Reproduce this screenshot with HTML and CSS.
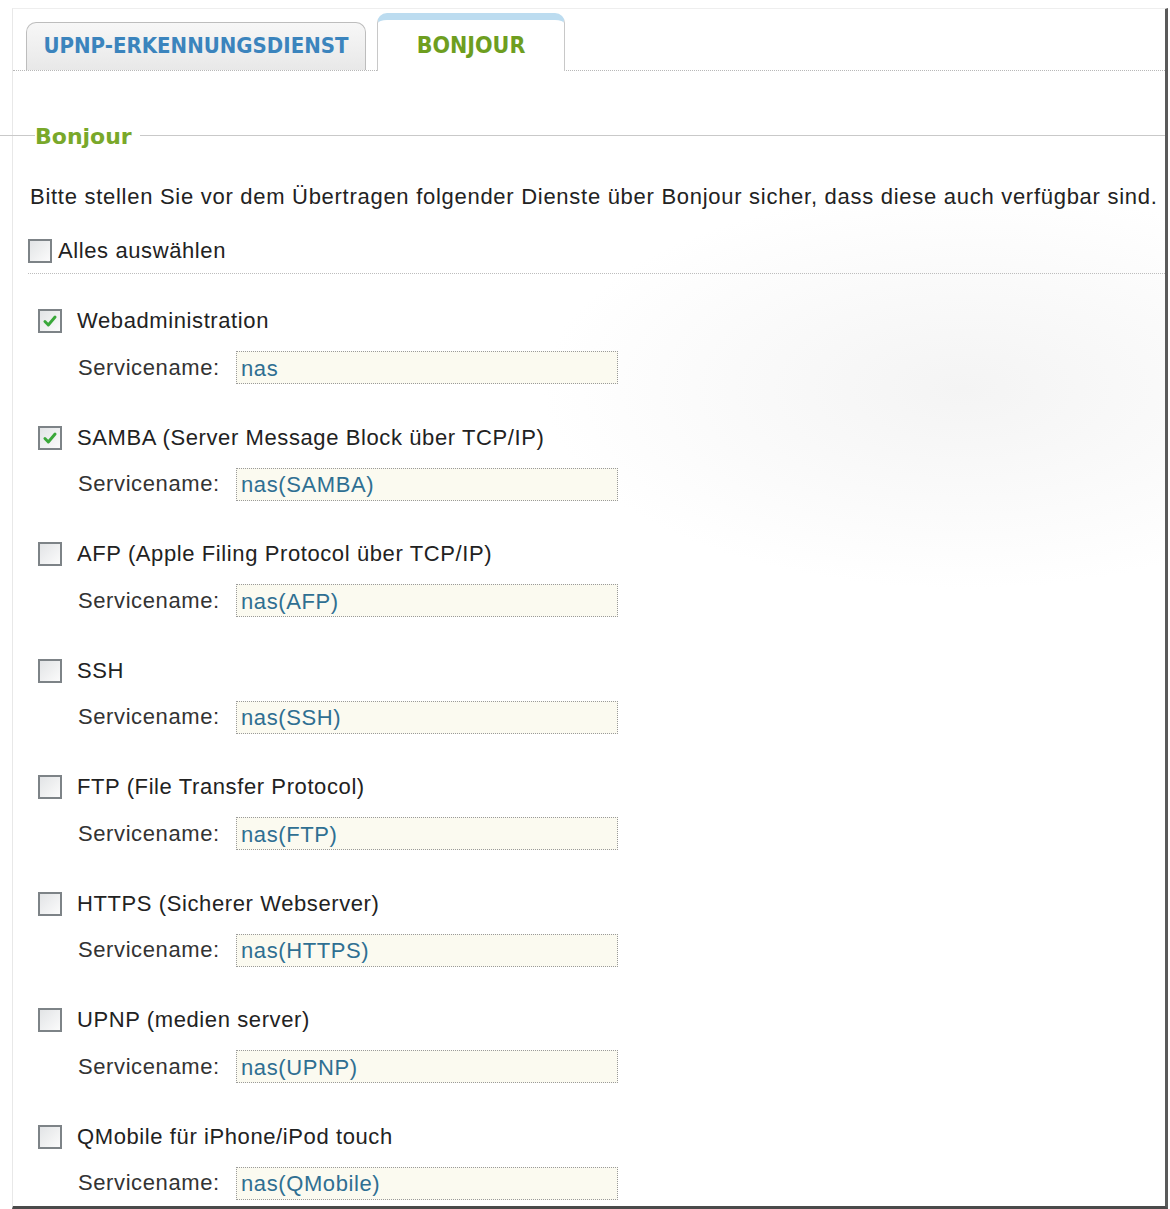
FILE: index.html
```html
<!DOCTYPE html>
<html lang="de">
<head>
<meta charset="utf-8">
<title>Bonjour</title>
<link rel="stylesheet" href="styles.css">
</head>
<body>
<div class="window">
  <div class="tabs">
    <div class="tab">UPNP-ERKENNUNGSDIENST</div>
    <div class="tab active">BONJOUR</div>
  </div>
  <div class="legend-row">
    <span class="legend-line short"></span>
    <span class="legend">Bonjour</span>
    <span class="legend-line long"></span>
  </div>
  <p class="intro">Bitte stellen Sie vor dem Übertragen folgender Dienste über Bonjour sicher, dass diese auch verfügbar sind.</p>
  <div class="select-all">
    <span class="cb"></span>
    <span>Alles auswählen</span>
  </div>
  <div class="services">
    <div class="service">
      <div class="service-head"><span class="cb checked"><svg viewBox="0 0 16 16"><path d="M3.5 8.5 L6.5 11.5 L12.5 4.5" /></svg></span><span>Webadministration</span></div>
      <div class="service-name"><span class="sn-label">Servicename:</span><span class="sn-input">nas</span></div>
    </div>
    <div class="service">
      <div class="service-head"><span class="cb checked"><svg viewBox="0 0 16 16"><path d="M3.5 8.5 L6.5 11.5 L12.5 4.5" /></svg></span><span>SAMBA (Server Message Block über TCP/IP)</span></div>
      <div class="service-name"><span class="sn-label">Servicename:</span><span class="sn-input">nas(SAMBA)</span></div>
    </div>
    <div class="service">
      <div class="service-head"><span class="cb"></span><span>AFP (Apple Filing Protocol über TCP/IP)</span></div>
      <div class="service-name"><span class="sn-label">Servicename:</span><span class="sn-input">nas(AFP)</span></div>
    </div>
    <div class="service">
      <div class="service-head"><span class="cb"></span><span>SSH</span></div>
      <div class="service-name"><span class="sn-label">Servicename:</span><span class="sn-input">nas(SSH)</span></div>
    </div>
    <div class="service">
      <div class="service-head"><span class="cb"></span><span>FTP (File Transfer Protocol)</span></div>
      <div class="service-name"><span class="sn-label">Servicename:</span><span class="sn-input">nas(FTP)</span></div>
    </div>
    <div class="service">
      <div class="service-head"><span class="cb"></span><span>HTTPS (Sicherer Webserver)</span></div>
      <div class="service-name"><span class="sn-label">Servicename:</span><span class="sn-input">nas(HTTPS)</span></div>
    </div>
    <div class="service">
      <div class="service-head"><span class="cb"></span><span>UPNP (medien server)</span></div>
      <div class="service-name"><span class="sn-label">Servicename:</span><span class="sn-input">nas(UPNP)</span></div>
    </div>
    <div class="service">
      <div class="service-head"><span class="cb"></span><span>QMobile für iPhone/iPod touch</span></div>
      <div class="service-name"><span class="sn-label">Servicename:</span><span class="sn-input">nas(QMobile)</span></div>
    </div>
  </div>
</div>
</body>
</html>
```

FILE: styles.css
```css
* { box-sizing: border-box; }
html, body { margin: 0; padding: 0; background: #fff; }
body {
  font-family: "Liberation Sans", Arial, sans-serif;
  color: #222;
  width: 1170px;
  height: 1209px;
  overflow: hidden;
  letter-spacing: 0.6px;
}
.window {
  margin: 8px 0 0 12px;
  width: 1156px;
  height: 1201px;
  border-left: 1px solid #e8e8e8;
  border-top: 1px solid #eeeeee;
  border-right: 3px solid #5a5a5a;
  border-bottom: 3px solid #4a4a4a;
  background: radial-gradient(ellipse 420px 200px at 950px 380px, #f4f4f4 0%, #fafafa 55%, #ffffff 100%);
}
.tabs {
  display: flex;
  align-items: flex-end;
  gap: 11px;
  height: 62px;
  padding-left: 13px;
  border-bottom: 1px dotted #b8b8b8;
  letter-spacing: 0;
}
.tab {
  width: 340px;
  height: 48px;
  border: 1px solid #bdbdbd;
  border-bottom: none;
  border-radius: 10px 10px 0 0;
  background: linear-gradient(#f7f7f7, #e8e8e8);
  display: flex;
  align-items: center;
  justify-content: center;
  font-family: "DejaVu Sans Condensed", "Liberation Sans", sans-serif;
  font-weight: bold;
  font-size: 22px;
  color: #3b84bd;
  padding-bottom: 2px;
}
.tab.active {
  width: 188px;
  height: 58px;
  border-color: #c8c8c8;
  border-top: 7px solid #bcdcf0;
  background: #fff;
  color: #6e9e1f;
  margin-bottom: -1px;
  font-size: 23px;
}
.legend-row {
  display: flex;
  align-items: center;
  margin: 50px 0 0 -13px;
  height: 28px;
  letter-spacing: 0;
}
.legend-line {
  height: 1px;
  background: #c9c9c9;
}
.legend-line.short { width: 35px; }
.legend-line.long { flex: 1; margin-left: 8px; }
.legend {
  font-family: "DejaVu Sans", sans-serif;
  font-weight: bold;
  font-size: 22px;
  color: #79a82a;
  padding-top: 3px;
}
.intro {
  margin: 36px 0 0 17px;
  font-size: 22px;
  line-height: 24px;
  color: #222;
  letter-spacing: 0.72px;
  white-space: nowrap;
}
.select-all {
  display: flex;
  align-items: center;
  gap: 6px;
  margin: 30px 0 0 15px;
  font-size: 22px;
  border-bottom: 1px dotted #bdbdbd;
  height: 35px;
  padding-bottom: 10px;
}
.cb {
  width: 24px;
  height: 24px;
  flex: none;
  border: 2px solid #7d8387;
  background: linear-gradient(135deg, #e2e4e6, #fbfbfb);
  display: inline-flex;
  align-items: center;
  justify-content: center;
}
.cb svg { width: 18px; height: 18px; }
.cb svg path { fill: none; stroke: #3aa83a; stroke-width: 2.6; stroke-linecap: round; stroke-linejoin: round; }
.services {
  padding: 34px 0 0 25px;
}
.service {
  height: 116.5px;
}
.service-head {
  display: flex;
  align-items: center;
  gap: 15px;
  font-size: 22px;
  height: 26px;
}
.service-name {
  display: flex;
  align-items: center;
  margin: 17px 0 0 40px;
  font-size: 22px;
}
.sn-label { width: 158px; color: #333; }
.sn-input {
  width: 382px;
  height: 33px;
  border: 1px dotted #9a9a9a;
  background: #fbfaf0;
  color: #2f6f92;
  padding: 2px 0 0 4px;
  display: flex;
  align-items: center;
}
```
